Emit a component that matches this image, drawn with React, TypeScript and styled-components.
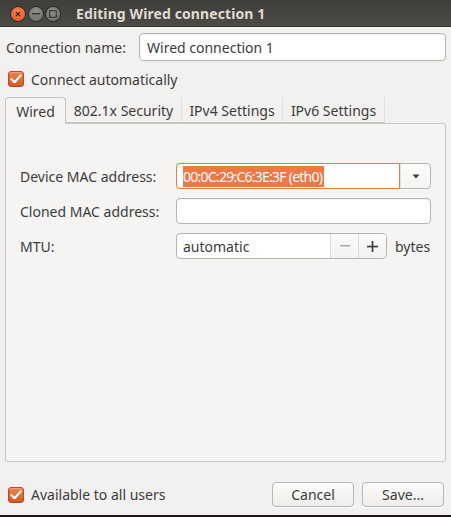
import React from "react";
import styled, { createGlobalStyle } from "styled-components";

const Global = createGlobalStyle`
  html, body { margin: 0; padding: 0; background: #f2f1f0; }
  * { box-sizing: border-box; }
  body { font-family: "Noto Sans", "DejaVu Sans", sans-serif; color: #3c3c3c; }
`;

const Window = styled.div`
  width: 451px;
  height: 517px;
  display: flex;
  flex-direction: column;
  background: #f2f1f0;
  border-bottom: 2px solid #2b0f1e;
  overflow: hidden;
`;

const TitleBar = styled.div`
  height: 27px;
  flex: none;
  display: flex;
  align-items: center;
  padding-left: 11px;
  background: linear-gradient(#3f3e3a, #4b4a45);
  border-bottom: 1px solid #34332f;
`;

const Controls = styled.div`
  display: flex;
  gap: 3.5px;
  margin-top: 2px;
`;

const Circle = styled.div<{ $kind: "close" | "min" | "max" }>`
  width: 14px;
  height: 14px;
  border-radius: 50%;
  display: flex;
  align-items: center;
  justify-content: center;
  background: ${(p) =>
    p.$kind === "close"
      ? "radial-gradient(circle at 50% 35%, #f7844f, #e0531f)"
      : "radial-gradient(circle at 50% 35%, #8e8d88, #6d6c67)"};
  box-shadow: 0 0 0 1px #2d2c29;
`;

const Title = styled.div`
  margin-left: 16px;
  font-family: "Noto Sans", "DejaVu Sans", sans-serif;
  font-weight: 700;
  font-size: 14px;
  color: #dfdbd2;
  letter-spacing: 0.1px;
`;

const Body = styled.div`
  flex: 1;
  display: flex;
  flex-direction: column;
  padding: 6px 5px 0 5px;
`;

const NameRow = styled.div`
  display: flex;
  align-items: center;
`;

const Label = styled.div<{ $w: number }>`
  width: ${(p) => p.$w}px;
  flex: none;
  font-size: 14px;
  padding-left: 1px;
`;

const Entry = styled.div<{ $w: number; $h?: number }>`
  width: ${(p) => p.$w}px;
  height: ${(p) => p.$h ?? 28}px;
  border: 1px solid #b8b4ae;
  border-radius: 4px;
  background: #ffffff;
  box-shadow: inset 0 1px 1px rgba(0, 0, 0, 0.06);
  display: flex;
  align-items: center;
  padding-left: 7px;
  font-size: 14px;
`;

const CheckRow = styled.label<{ $top?: number }>`
  display: flex;
  align-items: center;
  gap: 7px;
  height: 16px;
  font-size: 14px;
  padding-left: 3px;
  margin-top: ${(p) => p.$top ?? 0}px;
`;

const Box = styled.span`
  width: 16px;
  height: 16px;
  border-radius: 3px;
  border: 1px solid #b04a1c;
  background: linear-gradient(#ef8050, #d45a24);
  display: flex;
  align-items: center;
  justify-content: center;
  box-shadow: inset 0 1px 0 rgba(255, 255, 255, 0.25);
`;

const Tabs = styled.div`
  display: flex;
  align-items: flex-end;
  margin-top: 10px;
  height: 26px;
  position: relative;
  z-index: 1;
`;

const Tab = styled.div<{ $active?: boolean; $w: number }>`
  width: ${(p) => p.$w}px;
  display: flex;
  align-items: center;
  justify-content: center;
  font-size: 14px;
  color: #3c3c3c;
  ${(p) =>
    p.$active
      ? `height: 27px; padding-top: 1px; background: #f5f4f3; border: 1px solid #c9c6c1; border-bottom: none; border-radius: 4px 4px 0 0; margin-bottom: -1px;`
      : `height: 26px; padding-top: 1px; background: transparent; border-right: 1px solid #e2e0dc; border-bottom: 1px solid #c9c6c1;`}
`;

const TabFill = styled.div`
  flex: 1;
`;

const Panel = styled.div`
  height: 339px;
  border: 1px solid #c9c6c1;
  border-radius: 0 3px 3px 3px;
  background: #f5f4f3;
  padding: 39px 14px 0 13px;
  display: flex;
  flex-direction: column;
  gap: 9px;
`;

const FormRow = styled.div`
  display: flex;
  align-items: center;
  height: 26px;
`;

const Combo = styled.div`
  width: 255px;
  height: 26px;
  display: flex;
  border-radius: 4px;
  border: 1px solid #b8b4ae;
  background: linear-gradient(#fdfdfd, #f4f4f3);
`;

const ComboEntry = styled.div`
  flex: 1;
  margin: -1px 0 -1px -1px;
  border: 1px solid #f07746;
  border-radius: 4px 0 0 4px;
  background: #ffffff;
  display: flex;
  align-items: center;
  padding-left: 6px;
`;

const Selected = styled.span`
  background: #f07746;
  color: #ffffff;
  font-size: 14px;
  letter-spacing: -0.75px;
  height: 21px;
  line-height: 21px;
  padding-right: 2px;
`;

const ComboButton = styled.div`
  width: 30px;
  flex: none;
  display: flex;
  align-items: center;
  justify-content: center;
  border-left: 1px solid #e4e2de;
`;

const Spin = styled.div`
  width: 211px;
  height: 26px;
  display: flex;
  border: 1px solid #b8b4ae;
  border-radius: 4px;
  background: #ffffff;
  overflow: hidden;
`;

const SpinText = styled.div`
  flex: 1;
  display: flex;
  align-items: center;
  padding-left: 6px;
  font-size: 14px;
`;

const SpinBtn = styled.div<{ $dim?: boolean }>`
  width: 28px;
  flex: none;
  display: flex;
  align-items: center;
  justify-content: center;
  border-left: 1px solid #dcdad6;
  background: linear-gradient(#fbfbfb, #f3f2f1);
  color: ${(p) => (p.$dim ? "#a9a6a1" : "#3c3c3c")};
`;

const Unit = styled.div`
  margin-left: 8px;
  font-size: 14px;
`;

const Footer = styled.div`
  display: flex;
  align-items: center;
  margin-top: 20px;
  padding-right: 2px;
  height: 25px;
`;

const Spacer = styled.div`
  flex: 1;
`;

const Button = styled.div`
  width: 82px;
  height: 25px;
  border: 1px solid #b9b5af;
  border-radius: 4px;
  background: linear-gradient(#fcfcfb, #eeedeb);
  display: flex;
  align-items: center;
  justify-content: center;
  font-size: 14px;
  margin-left: 8px;
  box-shadow: 0 1px 0 rgba(255, 255, 255, 0.8);
`;

const Check = () => (
  <svg width="12" height="10" viewBox="0 0 12 10">
    <path d="M1.5 5.2 L4.6 8.2 L10.6 1.6" fill="none" stroke="#fff" strokeWidth="2.2" strokeLinecap="round" strokeLinejoin="round" />
  </svg>
);

export default function App() {
  return (
    <>
      <Global />
      <Window>
        <TitleBar>
          <Controls>
            <Circle $kind="close">
              <svg width="6" height="6" viewBox="0 0 6 6">
                <path d="M0.8 0.8 L5.2 5.2 M5.2 0.8 L0.8 5.2" stroke="#3a1a0c" strokeWidth="1.2" />
              </svg>
            </Circle>
            <Circle $kind="min">
              <svg width="8" height="2" viewBox="0 0 8 2">
                <rect x="0" y="0" width="8" height="1.5" fill="#3a3935" />
              </svg>
            </Circle>
            <Circle $kind="max">
              <svg width="8" height="8" viewBox="0 0 8 8">
                <rect x="0.7" y="0.7" width="6.6" height="6.6" fill="none" stroke="#3a3935" strokeWidth="1.2" />
              </svg>
            </Circle>
          </Controls>
          <Title>Editing Wired connection 1</Title>
        </TitleBar>
        <Body>
          <NameRow>
            <Label $w={134}>Connection name:</Label>
            <Entry $w={307}>Wired connection 1</Entry>
          </NameRow>
          <CheckRow $top={10}>
            <Box>
              <Check />
            </Box>
            Connect automatically
          </CheckRow>
          <Tabs>
            <Tab $active $w={61}>Wired</Tab>
            <Tab $w={116}>802.1x Security</Tab>
            <Tab $w={101}>IPv4 Settings</Tab>
            <Tab $w={102}>IPv6 Settings</Tab>
            <TabFill />
          </Tabs>
          <Panel>
            <FormRow>
              <Label $w={157}>Device MAC address:</Label>
              <Combo>
                <ComboEntry>
                  <Selected>00:0C:29:C6:3E:3F (eth0)</Selected>
                </ComboEntry>
                <ComboButton>
                  <svg width="8" height="5" viewBox="0 0 8 5">
                    <path d="M0.5 0.5 L7.5 0.5 L4 4.5 Z" fill="#3c3c3c" />
                  </svg>
                </ComboButton>
              </Combo>
            </FormRow>
            <FormRow>
              <Label $w={157}>Cloned MAC address:</Label>
              <Entry $w={255} $h={26} />
            </FormRow>
            <FormRow>
              <Label $w={157}>MTU:</Label>
              <Spin>
                <SpinText>automatic</SpinText>
                <SpinBtn $dim>
                  <svg width="10" height="2" viewBox="0 0 10 2">
                    <rect width="10" height="1.5" fill="currentColor" />
                  </svg>
                </SpinBtn>
                <SpinBtn>
                  <svg width="11" height="11" viewBox="0 0 11 11">
                    <rect x="0" y="4.7" width="11" height="1.7" fill="currentColor" />
                    <rect x="4.7" y="0" width="1.7" height="11" fill="currentColor" />
                  </svg>
                </SpinBtn>
              </Spin>
              <Unit>bytes</Unit>
            </FormRow>
          </Panel>
          <Footer>
            <CheckRow>
              <Box>
                <Check />
              </Box>
              Available to all users
            </CheckRow>
            <Spacer />
            <Button>Cancel</Button>
            <Button>Save...</Button>
          </Footer>
        </Body>
      </Window>
    </>
  );
}
